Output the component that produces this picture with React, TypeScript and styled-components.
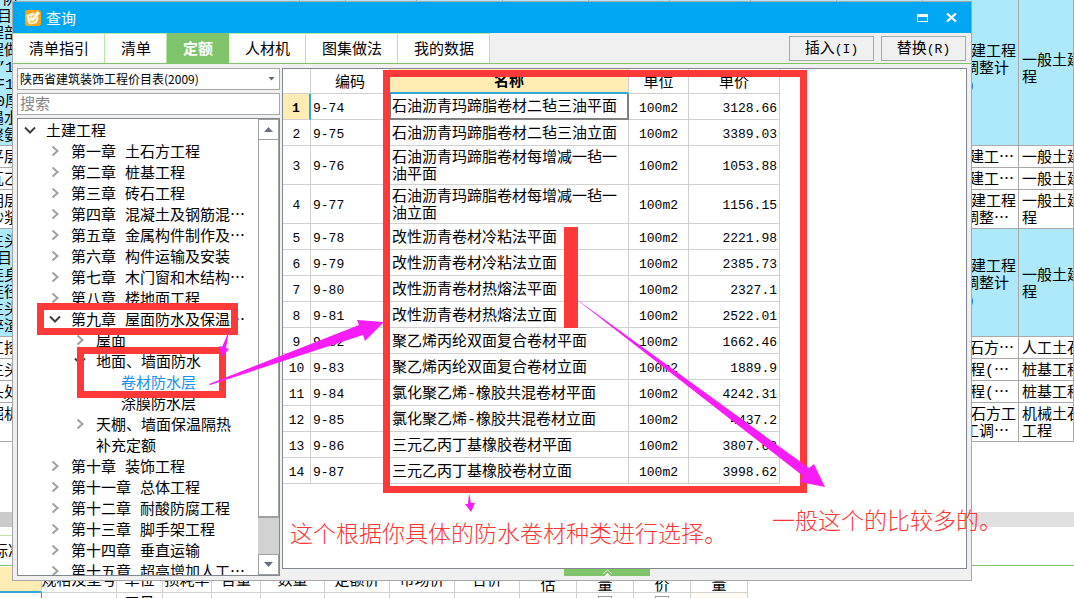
import React from "react";
import styled, { createGlobalStyle, css } from "styled-components";

const sans = `"Noto Sans CJK SC", "Noto Sans", sans-serif`;
const mixed = `"Liberation Mono", "Noto Sans CJK SC", monospace`;

const colors = {
  title: "#00a8f3",
  green: "#7fc36b",
  paleGreen: "#b8e6a4",
  yellow: "#ffebb4",
  blueLine: "#33a6d6",
  cyan: "#aee9fb",
  grid: "#d0d0d0",
  frame: "#a8a8a8",
  panel: "#838791",
  mark: "#fd3a39",
  arrow: "#f81cf8",
};

const GlobalStyle = createGlobalStyle`
  *, *::before, *::after { box-sizing: border-box; }
  body { margin: 0; background: #fff; color: #000; font: 15px/17px ${mixed}; }
  button, input, select { font: inherit; color: inherit; margin: 0; border-radius: 0; }
`;

const Page = styled.main`
  position: relative;
  height: 100vh;
  overflow: hidden;
`;

/* ---------- project sheet behind the dialog ---------- */

const Sheet = styled.table`
  width: 100%;
  table-layout: fixed;
  border-collapse: separate;
  border-spacing: 0;
`;

const SheetCell = styled.td<{ $tint?: boolean }>`
  padding: 0;
  background: ${(p) => (p.$tint ? colors.cyan : "#fff")};
  border-right: 1px solid ${colors.frame};
  border-bottom: 1px solid ${colors.frame};
`;

const Clip = styled.div<{ $h: number; $side?: "start" | "end" | "center"; $align?: string; $bottom?: number }>`
  height: ${(p) => p.$h}px;
  overflow: hidden;
  display: flex;
  flex-direction: column;
  justify-content: ${(p) => p.$align ?? "center"};
  align-items: ${(p) => (p.$side === "center" ? "center" : p.$side === "end" ? "flex-end" : "flex-start")};
  padding-top: 4px;
  padding-bottom: ${(p) => p.$bottom ?? 0}px;
  white-space: nowrap;
`;

const Line = styled.span<{ $start?: number; $end?: number }>`
  flex: none;
  margin-left: ${(p) => p.$start ?? 0}px;
  margin-right: ${(p) => p.$end ?? 0}px;
`;

const SheetScroll = styled.div`
  height: 15px;
  margin-top: 70px;
  background: linear-gradient(to right, #cbcbcb 50%, #e0e0e0 50%);
`;

const DetailTabs = styled.div`
  margin-top: 8px;
  height: 31px;
  border-bottom: 1px solid ${colors.green};
`;

const DetailTab = styled.div`
  width: 80px;
  height: 30px;
  line-height: 34px;
  overflow: hidden;
  border-top: 1px solid ${colors.paleGreen};
`;

const DetailTable = styled.table`
  margin-top: 1px;
  table-layout: fixed;
  width: 748px;
  border-collapse: separate;
  border-spacing: 0;
`;

const DetailHead = styled.th<{ $corner?: boolean }>`
  padding: 0;
  font-weight: 400;
  line-height: 11px;
  border-right: 1px solid ${colors.grid};
  border-bottom: 1px solid ${colors.grid};
  ${(p) => p.$corner && css`background: ${colors.yellow}; border-bottom: 2px solid ${colors.blueLine};`}
`;

const DetailCell = styled.td<{ $warm?: boolean; $first?: boolean }>`
  height: 24px;
  padding: 3px 0 0;
  text-align: center;
  vertical-align: top;
  border-right: 1px solid ${(p) => (p.$first ? "#777" : colors.grid)};
  background: ${(p) => (p.$warm ? "#fffaf4" : "#fff")};
`;

const Tick = styled.input`
  appearance: none;
  width: 14px;
  height: 14px;
  border: 1px solid #999;
  background: #fff;
`;

/* ---------- dialog ---------- */

const Dialog = styled.section`
  position: absolute;
  inset: 1px 102px 17px 12px;
  display: flex;
  flex-direction: column;
  background: #f0f0f0;
  border: 1px solid ${colors.frame};
`;

const TitleBar = styled.header`
  flex: none;
  height: 31px;
  padding: 0 8px 0 12px;
  display: flex;
  align-items: center;
  gap: 5px;
  background: ${colors.title};
  color: #fff;
`;

const Title = styled.h1`
  flex: 1;
  margin: 0;
  font: 400 15px/20px ${sans};
`;

const WindowButton = styled.button`
  width: 24px;
  height: 20px;
  padding: 0;
  border: 0;
  background: none;
  display: grid;
  place-items: center;
`;

const TabBar = styled.nav`
  flex: none;
  height: 31px;
  display: flex;
  border-bottom: 1px solid ${colors.green};
`;

const Tab = styled.button<{ $active?: boolean }>`
  padding: 4px 15px 0 16px;
  border: 0;
  border-top: 1px solid ${colors.paleGreen};
  border-right: 1px solid ${colors.paleGreen};
  background: #fff;
  ${(p) => p.$active && css`background: ${colors.green}; border-color: ${colors.green}; color: #fff; font-weight: 700;`}
`;

const Actions = styled.div`
  flex: 1;
  display: flex;
  justify-content: flex-end;
  align-items: flex-start;
  gap: 7px;
  padding: 3px 5px 0 0;
`;

const ActionButton = styled.button`
  width: 85px;
  height: 25px;
  padding: 2px 0 0;
  border: 1px solid ${colors.frame};
  background: #f0f0f0;
`;

const Latin = styled.span`
  font-size: 13px;
`;

const Body = styled.div`
  flex: 1;
  min-height: 0;
  display: flex;
  gap: 2px;
  padding: 4px;
`;

const Side = styled.aside`
  flex: none;
  width: 263px;
  display: flex;
  flex-direction: column;
  gap: 3px;
`;

const SelectBox = styled.div`
  position: relative;
  display: flex;
  svg { position: absolute; right: 5px; top: 9px; pointer-events: none; }
`;

const Select = styled.select`
  flex: 1;
  height: 22px;
  padding: 0 2px;
  appearance: none;
  border: 1px solid ${colors.frame};
  background: #fff;
  font: 12px/18px ${sans};
`;

const Search = styled.input`
  height: 22px;
  padding: 2px 2px 0;
  border: 1px solid ${colors.frame};
  background: #fff;
  &::placeholder { color: #868686; opacity: 1; }
`;

const TreeBox = styled.div`
  flex: 1;
  min-height: 0;
  display: flex;
  background: #fff;
  border: 1px solid ${colors.panel};
`;

const Tree = styled.ul`
  flex: 1;
  min-width: 0;
  margin: 0;
  padding: 1px 0 0;
  list-style: none;
  overflow: hidden;
`;

const Node = styled.li<{ $level: number; $selected?: boolean }>`
  height: 21px;
  padding-left: ${(p) => p.$level * 25}px;
  display: flex;
  align-items: center;
  white-space: nowrap;
  color: ${(p) => (p.$selected ? "#1590f5" : "#000")};
`;

const Toggle = styled.span`
  flex: none;
  width: 28px;
  padding-left: 6px;
  display: flex;
`;

const NodeText = styled.span`
  padding-top: 4px;
`;

const Dots = styled.span`
  font-family: ${sans};
  line-height: 1px;
`;

const ScrollBar = styled.div`
  flex: none;
  width: 21px;
  display: flex;
  flex-direction: column;
  background: #d2d2d2;
`;

const ScrollButton = styled.button`
  height: 21px;
  padding: 0;
  display: grid;
  place-items: center;
  border: 1px solid #a0a0a0;
  background: #fff;
`;

const Thumb = styled.div`
  flex: 1;
  border: solid #a0a0a0;
  border-width: 0 1px 2px;
  background: #fff;
`;

const Track = styled.div`
  flex: none;
  height: 36px;
`;

const Main = styled.div`
  flex: 1;
  min-width: 0;
  display: flex;
  flex-direction: column;
`;

const Results = styled.div`
  flex: 1;
  min-height: 0;
  overflow: hidden;
  background: #fff;
  border: 1px solid ${colors.panel};
`;

const Expander = styled.button`
  flex: none;
  width: 86px;
  height: 7px;
  margin-left: 282px;
  padding: 0;
  border: 0;
  background: ${colors.green};
  display: grid;
  place-items: center;
`;

const Grid = styled.table`
  width: 497px;
  table-layout: fixed;
  border-collapse: separate;
  border-spacing: 0;
`;

const Head = styled.th<{ $active?: boolean }>`
  height: 25px;
  padding: 4px 0 0;
  font-weight: 400;
  border-right: 1px solid ${colors.grid};
  border-bottom: 1px solid ${colors.grid};
  ${(p) => p.$active && css`font-weight: 700; background: ${colors.yellow}; border-bottom: 2px solid ${colors.blueLine};`}
`;

const Row = styled.tr<{ $tall?: boolean }>`
  height: ${(p) => (p.$tall ? 39 : 26)}px;
`;

const Index = styled.th<{ $active?: boolean }>`
  padding: 3px 0 0;
  font-size: 13px;
  font-weight: 400;
  border-right: 1px solid ${colors.grid};
  border-bottom: 1px solid ${colors.grid};
  ${(p) => p.$active && css`font-weight: 700; background: ${colors.yellow}; border-right: 2px solid ${colors.blueLine};`}
`;

const Cell = styled.td<{ $kind: "code" | "name" | "unit" | "price"; $active?: boolean }>`
  padding: 3px 2px 0;
  border-right: 1px solid ${colors.grid};
  border-bottom: 1px solid ${colors.grid};
  font-size: ${(p) => (p.$kind === "name" ? 15 : 13)}px;
  text-align: ${(p) => (p.$kind === "unit" ? "center" : p.$kind === "price" ? "right" : "left")};
  ${(p) => p.$active && css`padding-left: 1px; border: 2px solid #808080; border-width: 0 2px 2px 1px;`}
`;

/* ---------- hand-drawn notes over everything ---------- */

const Marks = styled.svg`
  position: absolute;
  left: 0;
  top: 0;
  pointer-events: none;
`;

const Note = styled.p<{ $x: number; $y: number }>`
  position: absolute;
  left: ${(p) => p.$x}px;
  top: ${(p) => p.$y}px;
  margin: 0;
  font: 300 23px/32px ${sans};
  color: #fc3535;
  white-space: nowrap;
`;

type SheetLine = [text: string, offset: number];
type SheetRow = { h: number; tint?: boolean; bottom?: number; left: SheetLine[]; mid: SheetLine[]; right: string[] };

const sheetRows: SheetRow[] = [
  {
    h: 145, tint: true, bottom: 10,
    left: [["防", 3], ["目", -3], ["程部", -11], ["程做", -11], ["”1", -4], ["F1", -4], ["0厚", -4], ["遇水", -11], ["聚氨", -11]],
    mid: [["建工程", 2], ["调整计", 9], [")", 43]],
    right: ["一般土建", "程"],
  },
  { h: 21, left: [["平层", -11]], mid: [["建工…", 4]], right: ["一般土建"] },
  { h: 21, left: [["瓦乙", -11]], mid: [["建工…", 4]], right: ["一般土建"] },
  { h: 38, left: [["阴层", -11], ["砂浆", -11]], mid: [["建工程", 2], ["调整…", 9]], right: ["一般土建", "程"] },
  {
    h: 107, tint: true,
    left: [["主头", -11], ["目", -3], ["连身", -11], ["连径", -11], ["主头", -11], ["碎渣", -11]],
    mid: [["建工程", 2], ["调整计", 9], [")", 43]],
    right: ["一般土建", "程"],
  },
  { h: 21, left: [["工挖", -11]], mid: [["石方…", 4]], right: ["人工土石"] },
  { h: 21, left: [["主头", -11]], mid: [["程(…", 9]], right: ["桩基工程"] },
  { h: 21, left: [["头处", -11]], mid: [["程(…", 9]], right: ["桩基工程"] },
  { h: 38, bottom: 0, left: [["掘机", -11], ["\u00a0", 0]], mid: [["石方工", 2], ["工调…", 9]], right: ["机械土石", "工程"] },
];

const sheetColumns = [300, 46, 71, 86, 86, 81, 81, 86, 86, 96];
const detailColumns = [42, 75, 46, 49, 49, 64, 65, 65, 65, 57, 57, 57, 57];
const detailHeads = ["规格及型号", "单位", "损耗率", "含量", "数量", "定额价", "市场价", "合价", "估", "量", "价", "量"];

type TreeItem = { text: string; level: number; state?: "open" | "closed"; selected?: boolean };

const treeItems: TreeItem[] = [
  { text: "土建工程", level: 0, state: "open" },
  { text: "第一章 土石方工程", level: 1, state: "closed" },
  { text: "第二章 桩基工程", level: 1, state: "closed" },
  { text: "第三章 砖石工程", level: 1, state: "closed" },
  { text: "第四章 混凝土及钢筋混…", level: 1, state: "closed" },
  { text: "第五章 金属构件制作及…", level: 1, state: "closed" },
  { text: "第六章 构件运输及安装", level: 1, state: "closed" },
  { text: "第七章 木门窗和木结构…", level: 1, state: "closed" },
  { text: "第八章 楼地面工程", level: 1, state: "closed" },
  { text: "第九章 屋面防水及保温…", level: 1, state: "open" },
  { text: "屋面", level: 2, state: "closed" },
  { text: "地面、墙面防水", level: 2, state: "open" },
  { text: "卷材防水层", level: 3, selected: true },
  { text: "涂膜防水层", level: 3 },
  { text: "天棚、墙面保温隔热", level: 2, state: "closed" },
  { text: "补充定额", level: 2 },
  { text: "第十章 装饰工程", level: 1, state: "closed" },
  { text: "第十一章 总体工程", level: 1, state: "closed" },
  { text: "第十二章 耐酸防腐工程", level: 1, state: "closed" },
  { text: "第十三章 脚手架工程", level: 1, state: "closed" },
  { text: "第十四章 垂直运输", level: 1, state: "closed" },
  { text: "第十五章 超高增加人工…", level: 1, state: "closed" },
];

const quotas: [code: string, name: string, price: string][] = [
  ["9-74", "石油沥青玛蹄脂卷材二毡三油平面", "3128.66"],
  ["9-75", "石油沥青玛蹄脂卷材二毡三油立面", "3389.03"],
  ["9-76", "石油沥青玛蹄脂卷材每增减一毡一油平面", "1053.88"],
  ["9-77", "石油沥青玛蹄脂卷材每增减一毡一油立面", "1156.15"],
  ["9-78", "改性沥青卷材冷粘法平面", "2221.98"],
  ["9-79", "改性沥青卷材冷粘法立面", "2385.73"],
  ["9-80", "改性沥青卷材热熔法平面", "2327.1"],
  ["9-81", "改性沥青卷材热熔法立面", "2522.01"],
  ["9-82", "聚乙烯丙纶双面复合卷材平面", "1662.46"],
  ["9-83", "聚乙烯丙纶双面复合卷材立面", "1889.9"],
  ["9-84", "氯化聚乙烯-橡胶共混卷材平面", "4242.31"],
  ["9-85", "氯化聚乙烯-橡胶共混卷材立面", "4437.2"],
  ["9-86", "三元乙丙丁基橡胶卷材平面", "3807.63"],
  ["9-87", "三元乙丙丁基橡胶卷材立面", "3998.62"],
];

const tabs = ["清单指引", "清单", "定额", "人材机", "图集做法", "我的数据"];

/* The Chinese ellipsis sits at mid height, so it takes the CJK face. */
function Label({ text }: { text: string }) {
  const cut = text.endsWith("…");
  return (
    <>
      {cut ? text.slice(0, -1) : text}
      {cut && <Dots>…</Dots>}
    </>
  );
}

function Chevron({ state }: { state: "open" | "closed" }) {
  return state === "open" ? (
    <svg width="12" height="12" viewBox="0 0 12 12" fill="none" stroke="#404040" strokeWidth="2">
      <path d="M1 2.5 L6 7.5 L11 2.5" />
    </svg>
  ) : (
    <svg width="12" height="12" viewBox="0 0 12 12" fill="none" stroke="#a0a0a0" strokeWidth="2">
      <path d="M3.5 0.5 L8.5 5 L3.5 9.5" />
    </svg>
  );
}

function AppIcon() {
  return (
    <svg width="16" height="16" viewBox="0 0 16 16">
      <rect width="16" height="16" rx="3" fill="#f7a61c" />
      <path d="M1.5 5 L8 2.5 L10 4 L6.5 7 L5 6 L3.6 7.6 L6.8 10.5 L12.5 5.8 L13.5 8 L12 13 L5 14.4 Q2.6 13.5 2.4 11 Z" fill="#fff3d6" />
      <path d="M12.4 1 L15 3.4 L7.2 10.4 L4.2 8 L5.4 6.8 L7.2 8 Z" fill="#fff" />
      <path d="M5 12 Q8.4 12.4 11 9.4" fill="none" stroke="#f7a61c" strokeWidth="1" />
    </svg>
  );
}

function BackgroundSheet() {
  return (
    <>
      <Sheet>
        <colgroup>
          {sheetColumns.map((w, i) => <col key={i} style={{ width: w }} />)}
          <col />
        </colgroup>
        <tbody>
          {sheetRows.map((row, r) => (
            <tr key={r}>
              <SheetCell $tint={row.tint}>
                <Clip $h={row.h} $align={r === 0 ? "flex-end" : "center"}>
                  {row.left.map(([text, x], i) => <Line key={i} $start={x}>{text}</Line>)}
                </Clip>
              </SheetCell>
              {sheetColumns.slice(2).map((_, i) => <SheetCell key={i} $tint={row.tint} />)}
              <SheetCell $tint={row.tint}>
                <Clip $h={row.h} $side="end" $bottom={row.bottom}>
                  {row.mid.map(([text, x], i) => <Line key={i} $end={x}><Label text={text} /></Line>)}
                </Clip>
              </SheetCell>
              <SheetCell $tint={row.tint}>
                <Clip $h={row.h} $bottom={row.bottom}>
                  {row.right.map((text, i) => <Line key={i} $start={3}>{text}</Line>)}
                </Clip>
              </SheetCell>
            </tr>
          ))}
        </tbody>
      </Sheet>
      <SheetScroll />
      <DetailTabs>
        <DetailTab><Line $start={-7}>标准</Line></DetailTab>
      </DetailTabs>
      <DetailTable>
        <colgroup>
          {detailColumns.map((w, i) => <col key={i} style={{ width: w }} />)}
        </colgroup>
        <thead>
          <tr>
            <DetailHead $corner />
            {detailHeads.map((text, i) => (
              <DetailHead key={i}>
                <Clip $h={25} $side="center" $align={text.length === 1 ? "flex-end" : "center"}>
                  <Line>{text}</Line>
                </Clip>
              </DetailHead>
            ))}
          </tr>
        </thead>
        <tbody>
          <tr>
            {detailColumns.map((_, i) => (
              <DetailCell key={i} $first={i === 0} $warm={i === 12}>
                {i === 2 && "工日"}
                {(i === 10 || i === 11) && <Tick type="checkbox" aria-label={detailHeads[i - 1]} />}
              </DetailCell>
            ))}
          </tr>
        </tbody>
      </DetailTable>
    </>
  );
}

function SidePanel() {
  return (
    <Side>
      <SelectBox>
        <Select aria-label="定额库">
          <option>陕西省建筑装饰工程价目表(2009)</option>
        </Select>
        <svg width="7" height="4" viewBox="0 0 7 4"><path d="M0.5 0 H6.5 L3.5 3.5 Z" fill="#5f6672" /></svg>
      </SelectBox>
      <Search type="text" placeholder="搜索" aria-label="搜索" />
      <TreeBox>
        <Tree>
          {treeItems.map((item) => (
            <Node key={item.text} $level={item.level} $selected={item.selected}>
              <Toggle>{item.state && <Chevron state={item.state} />}</Toggle>
              <NodeText><Label text={item.text} /></NodeText>
            </Node>
          ))}
        </Tree>
        <ScrollBar>
          <ScrollButton aria-label="向上">
            <svg width="9" height="5" viewBox="0 0 9 5"><path d="M0 5 L4.5 0 L9 5 Z" fill="#6b7080" /></svg>
          </ScrollButton>
          <Thumb />
          <Track />
          <ScrollButton aria-label="向下">
            <svg width="9" height="5" viewBox="0 0 9 5"><path d="M0 0 L4.5 5 L9 0 Z" fill="#6b7080" /></svg>
          </ScrollButton>
        </ScrollBar>
      </TreeBox>
    </Side>
  );
}

function QuotaTable() {
  return (
    <Grid>
      <colgroup>
        {[28, 79, 239, 60, 91].map((w, i) => <col key={i} style={{ width: w }} />)}
      </colgroup>
      <thead>
        <tr>
          <Head />
          <Head>编码</Head>
          <Head $active>名称</Head>
          <Head>单位</Head>
          <Head>单价</Head>
        </tr>
      </thead>
      <tbody>
        {quotas.map(([code, name, price], i) => (
          <Row key={code} $tall={name.length > 15}>
            <Index $active={i === 0}>{i + 1}</Index>
            <Cell $kind="code">{code}</Cell>
            <Cell $kind="name" $active={i === 0}>{name}</Cell>
            <Cell $kind="unit">100m2</Cell>
            <Cell $kind="price">{price}</Cell>
          </Row>
        ))}
      </tbody>
    </Grid>
  );
}

function Annotations() {
  return (
    <>
      <Marks width="1000" height="560" viewBox="0 0 1000 560">
        <g fill="none" stroke={colors.mark} strokeWidth="7">
          <rect x="40.5" y="306.5" width="194" height="25" />
          <rect x="80.5" y="350.5" width="142" height="44" />
          <rect x="386.5" y="73.5" width="417" height="416" />
        </g>
        <rect x="564" y="227" width="14" height="101" fill={colors.mark} />
        <g fill={colors.arrow}>
          <path d="M209 384 L359 325 L357 320 L384 322 L365 341 L363 335 L210 385 Z" />
          <path d="M572 296 L809 468 L814 464 L825 487 L800 482 L803 476 Z" />
          <path d="M469 493 L471 503 L475 503 L471 512 L465 504 L468 504 Z" />
          <path d="M229 331 L226 348 L229 349 L222 357 L219 346 L222 347 Z" />
        </g>
      </Marks>
      <Note $x={290} $y={516}>这个根据你具体的防水卷材种类进行选择。</Note>
      <Note $x={772} $y={503}>一般这个的比较多的。</Note>
    </>
  );
}

export default function App() {
  return (
    <Page lang="zh-CN">
      <GlobalStyle />
      <BackgroundSheet />
      <Dialog role="dialog" aria-label="查询">
        <TitleBar>
          <AppIcon />
          <Title>查询</Title>
          <WindowButton aria-label="最大化">
            <svg width="11" height="8" viewBox="0 0 11 8">
              <path d="M0 0 H11 V8 H0 Z M1 3 V7 H10 V3 Z" fill="#fff" fillRule="evenodd" />
            </svg>
          </WindowButton>
          <WindowButton aria-label="关闭">
            <svg width="11" height="9" viewBox="0 0 11 9" stroke="#fff" strokeWidth="2.2">
              <path d="M1 0.5 L10 8.5 M10 0.5 L1 8.5" />
            </svg>
          </WindowButton>
        </TitleBar>
        <TabBar>
          {tabs.map((name) => <Tab key={name} $active={name === "定额"}>{name}</Tab>)}
          <Actions>
            <ActionButton>插入<Latin>(I)</Latin></ActionButton>
            <ActionButton>替换<Latin>(R)</Latin></ActionButton>
          </Actions>
        </TabBar>
        <Body>
          <SidePanel />
          <Main>
            <Results><QuotaTable /></Results>
            <Expander aria-label="展开">
              <svg width="11" height="7" viewBox="0 0 11 7">
                <path d="M1 5 L5.5 1 L10 5" fill="none" stroke="#d9efd2" />
                <path d="M2.5 7 L5.5 4 L8.5 7 Z" fill="#fff" />
              </svg>
            </Expander>
          </Main>
        </Body>
      </Dialog>
      <Annotations />
    </Page>
  );
}
